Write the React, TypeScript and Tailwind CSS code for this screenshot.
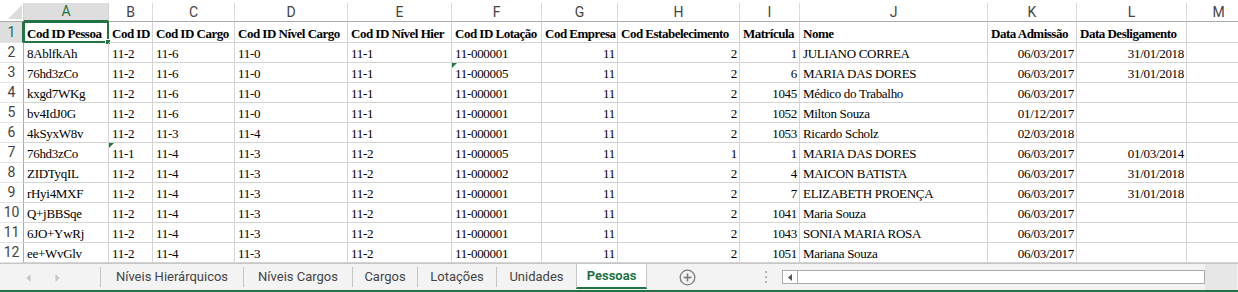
import React from 'react';

const COLS = ['A', 'B', 'C', 'D', 'E', 'F', 'G', 'H', 'I', 'J', 'K', 'L', 'M'];
const HEADER = [
  'Cod ID Pessoa',
  'Cod ID',
  'Cod ID Cargo',
  'Cod ID Nível Cargo',
  'Cod ID Nível Hier',
  'Cod ID Lotação',
  'Cod Empresa',
  'Cod Estabelecimento',
  'Matrícula',
  'Nome',
  'Data Admissão',
  'Data Desligamento',
  '',
];
const ROWS: string[][] = [
  ['8AblfkAh', '11-2', '11-6', '11-0', '11-1', '11-000001', '11', '2', '1', 'JULIANO CORREA', '06/03/2017', '31/01/2018', ''],
  ['76hd3zCo', '11-2', '11-6', '11-0', '11-1', '11-000005', '11', '2', '6', 'MARIA DAS DORES', '06/03/2017', '31/01/2018', ''],
  ['kxgd7WKg', '11-2', '11-6', '11-0', '11-1', '11-000001', '11', '2', '1045', 'Médico do Trabalho', '06/03/2017', '', ''],
  ['bv4IdJ0G', '11-2', '11-6', '11-0', '11-1', '11-000001', '11', '2', '1052', 'Milton Souza', '01/12/2017', '', ''],
  ['4kSyxW8v', '11-2', '11-3', '11-4', '11-1', '11-000001', '11', '2', '1053', 'Ricardo Scholz', '02/03/2018', '', ''],
  ['76hd3zCo', '11-1', '11-4', '11-3', '11-2', '11-000005', '11', '1', '1', 'MARIA DAS DORES', '06/03/2017', '01/03/2014', ''],
  ['ZIDTyqIL', '11-2', '11-4', '11-3', '11-2', '11-000002', '11', '2', '4', 'MAICON BATISTA', '06/03/2017', '31/01/2018', ''],
  ['rHyi4MXF', '11-2', '11-4', '11-3', '11-2', '11-000001', '11', '2', '7', 'ELIZABETH PROENÇA', '06/03/2017', '31/01/2018', ''],
  ['Q+jBBSqe', '11-2', '11-4', '11-3', '11-2', '11-000001', '11', '2', '1041', 'Maria Souza', '06/03/2017', '', ''],
  ['6JO+YwRj', '11-2', '11-4', '11-3', '11-2', '11-000001', '11', '2', '1043', 'SONIA MARIA ROSA', '06/03/2017', '', ''],
  ['ee+WvGlv', '11-2', '11-4', '11-3', '11-2', '11-000001', '11', '2', '1051', 'Mariana Souza', '06/03/2017', '', ''],
];
const RIGHT = new Set([6, 7, 8, 10, 11]);
// cells with the green "number stored as text" marker: [rowIndex, colIndex]
const MARKERS = new Set(['1-5', '5-1']);

const GRID =
  'grid grid-cols-[24px_85px_44px_82px_113px_104px_90px_76px_122px_60px_188px_89px_110px_64px]';

function GreenMarker() {
  return (
    <svg className="absolute left-0 top-0" width="6" height="6" viewBox="0 0 6 6">
      <polygon points="0,0 5,0 0,5" fill="#1c7c3c" />
    </svg>
  );
}

function ColumnHeader() {
  return (
    <div className="bg-white pt-[3px]">
      <div className={GRID}>
        <div className="relative h-[19px] border-r border-b border-r-[#d4d4d4] border-b-[#ababab] bg-white">
          <svg className="absolute left-[8px] top-[2px]" width="14" height="14" viewBox="0 0 14 14">
            <polygon points="14,0 14,14 0,14" fill="#dcdcdc" />
          </svg>
        </div>
        {COLS.map((c, i) =>
          i === 0 ? (
            <div
              key={c}
              className="flex h-[19px] items-center justify-center border-r border-b-2 border-r-[#d4d4d4] border-b-[#217346] bg-[#dedede] text-[14px] text-[#217346] font-['Roboto',sans-serif]"
            >
              {c}
            </div>
          ) : (
            <div
              key={c}
              className="flex h-[19px] items-center justify-center border-r border-b border-r-[#dadada] border-b-[#ababab] text-[14px] text-[#444] font-['Roboto',sans-serif]"
            >
              {c}
            </div>
          ),
        )}
      </div>
    </div>
  );
}

function HeaderRow() {
  return (
    <div className={GRID}>
      <div className="flex h-[21px] items-center justify-center border-r-2 border-b border-r-[#217346] border-b-[#e3e3e3] bg-[#dedede] pl-[1px] text-[14px] text-[#217346] font-['Roboto',sans-serif]">
        1
      </div>
      {HEADER.map((h, i) => (
        <div
          key={i}
          className="relative h-[21px] whitespace-nowrap border-r border-b border-[#d4d4d4] pl-[3px] text-[13px] font-bold leading-[23px] tracking-[-0.5px] text-black font-['Liberation_Serif',serif]"
        >
          {h}
          {i === 0 && (
            <>
              <div className="pointer-events-none absolute -left-[1px] -top-[1px] -right-[1px] bottom-[-1px] border-2 border-[#217346]" />
              <div className="absolute -right-[3px] -bottom-[3px] h-[6px] w-[6px] border border-white bg-[#217346]" />
            </>
          )}
        </div>
      ))}
    </div>
  );
}

function DataRow({ row, idx }: { row: string[]; idx: number }) {
  return (
    <div className={GRID}>
      <div className="flex h-[20px] items-center justify-center border-r border-b border-r-[#ababab] border-b-[#e3e3e3] text-[14px] text-[#444] font-['Roboto',sans-serif]">
        {idx + 2}
      </div>
      {row.map((v, i) => (
        <div
          key={i}
          className={
            'relative h-[20px] whitespace-nowrap border-r border-b border-[#d4d4d4] text-[13px] leading-[22px] tracking-[-0.3px] text-black font-[\'Liberation_Serif\',serif] ' +
            (RIGHT.has(i) ? 'pr-[2px] text-right' : 'pl-[3px]')
          }
        >
          {MARKERS.has(`${idx}-${i}`) && <GreenMarker />}
          {v}
        </div>
      ))}
    </div>
  );
}

function Sep() {
  return <div className="h-[20px] w-px self-center bg-[#c6c6c6]" />;
}

function Tab({ label, w }: { label: string; w: string }) {
  return (
    <div className={`flex items-center justify-center text-[13px] text-[#444] font-['Roboto',sans-serif] ${w}`}>
      {label}
    </div>
  );
}

function TabBar() {
  return (
    <div className="flex flex-col">
      <div className="flex h-[27px] border-t border-[#c6c6c6] bg-[#f3f3f3]">
        <div className="relative w-[100px]">
          <svg className="absolute left-[26px] top-[10px]" width="5" height="8" viewBox="0 0 5 8">
            <polygon points="4.5,0 4.5,8 0.5,4" fill="#c4c4c4" />
          </svg>
          <svg className="absolute left-[55px] top-[10px]" width="5" height="8" viewBox="0 0 5 8">
            <polygon points="0.5,0 0.5,8 4.5,4" fill="#c4c4c4" />
          </svg>
        </div>
        <Sep />
        <Tab label="Níveis Hierárquicos" w="w-[142px]" />
        <Sep />
        <Tab label="Níveis Cargos" w="w-[108px]" />
        <Sep />
        <Tab label="Cargos" w="w-[64px]" />
        <Sep />
        <Tab label="Lotações" w="w-[78px]" />
        <Sep />
        <Tab label="Unidades" w="w-[79px]" />
        <div className="flex h-[25px] w-[71px] items-center justify-center border-x border-b-2 border-x-[#c6c6c6] border-b-[#217346] bg-white pt-[1px] text-[13px] font-bold text-[#217346] font-['Roboto',sans-serif]">
          Pessoas
        </div>
        <div className="flex w-[81px] items-center justify-center">
          <svg width="17" height="17" viewBox="0 0 17 17">
            <circle cx="8.5" cy="8.5" r="7.3" fill="none" stroke="#7a7a7a" strokeWidth="1.3" />
            <line x1="8.5" y1="4.5" x2="8.5" y2="12.5" stroke="#7a7a7a" strokeWidth="1.6" />
            <line x1="4.5" y1="8.5" x2="12.5" y2="8.5" stroke="#7a7a7a" strokeWidth="1.6" />
          </svg>
        </div>
        <div className="flex w-[54px] flex-col items-start justify-center gap-[3px] pl-[37px]">
          <div className="h-[2px] w-[2px] bg-[#b4b4b4]" />
          <div className="h-[2px] w-[2px] bg-[#b4b4b4]" />
          <div className="h-[2px] w-[2px] bg-[#b4b4b4]" />
        </div>
        <div className="flex h-[14px] w-[423px] self-center border border-[#ababab] bg-white">
          <div className="flex w-[15px] items-center justify-center border-r border-[#ababab]">
            <svg width="4" height="7" viewBox="0 0 4 7">
              <polygon points="4,0 4,7 0,3.5" fill="#555" />
            </svg>
          </div>
        </div>
        <div className="w-[32px] bg-[#e6e6e6]" />
      </div>
      <div className="h-[2px] bg-[#217346]" />
    </div>
  );
}

export default function App() {
  return (
    <div className="h-[292px] w-[1238px] overflow-hidden bg-white">
      <ColumnHeader />
      <HeaderRow />
      {ROWS.map((r, i) => (
        <DataRow key={i} row={r} idx={i} />
      ))}
      <TabBar />
    </div>
  );
}
